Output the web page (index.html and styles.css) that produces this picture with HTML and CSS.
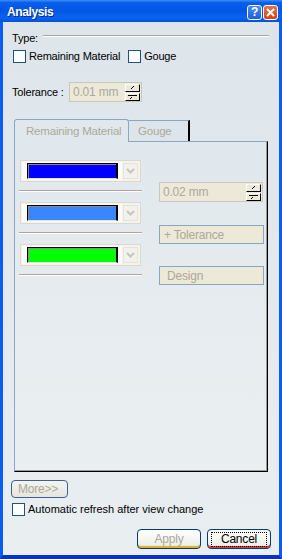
FILE: index.html
```html
<!DOCTYPE html>
<html lang="en">
<head>
  <meta charset="UTF-8" />
  <title>Analysis</title>
  <link rel="stylesheet" href="styles.css">
</head>
<body>
  <div class="window">
    <div class="titlebar">
      <span class="title">Analysis</span>
      <div class="capBtns">
        <span class="capBtn help">?</span>
        <span class="capBtn close">
          <svg width="9" height="9" viewBox="0 0 9 9"><path d="M1 1L8 8M8 1L1 8" stroke="#fff" stroke-width="2"/></svg>
        </span>
      </div>
    </div>
    <div class="frame">
      <div class="content">
        <div class="groupHead"><span>Type:</span><span class="rule"></span></div>
        <div class="checkRow">
          <label class="check"><span class="box"></span>Remaining Material</label>
          <label class="check"><span class="box"></span>Gouge</label>
        </div>
        <div class="tolRow">
          <span class="tolLabel">Tolerance :</span>
          <div class="spin tolSpin">
            <span class="spinVal">0.01 mm</span>
            <span class="spinBtns">
              <span class="spinBtn"><svg width="7" height="5" viewBox="0 0 7 5"><path d="M2 4L5 1" stroke="#000"/></svg></span>
              <span class="spinBtn"><svg width="9" height="6" viewBox="0 0 9 6"><path d="M0 1.5H9M2 5L4 3" stroke="#000"/></svg></span>
            </span>
          </div>
        </div>

        <div class="tabs">
          <div class="tabStrip">
            <span class="tab active">Remaining Material</span>
            <span class="tab">Gouge</span>
          </div>
          <div class="tabPanel">
            <div class="colLeft">
              <div class="combo"><span class="swatchWrap"><span class="swatch blue"></span></span><span class="drop"><svg width="9" height="6" viewBox="0 0 9 6"><path d="M1 1L4.5 4.5L8 1" stroke="#c8c6bb" stroke-width="2" fill="none"/></svg></span></div>
              <div class="sep"></div>
              <div class="combo"><span class="swatchWrap"><span class="swatch sky"></span></span><span class="drop"><svg width="9" height="6" viewBox="0 0 9 6"><path d="M1 1L4.5 4.5L8 1" stroke="#c8c6bb" stroke-width="2" fill="none"/></svg></span></div>
              <div class="sep"></div>
              <div class="combo"><span class="swatchWrap"><span class="swatch green"></span></span><span class="drop"><svg width="9" height="6" viewBox="0 0 9 6"><path d="M1 1L4.5 4.5L8 1" stroke="#c8c6bb" stroke-width="2" fill="none"/></svg></span></div>
              <div class="sep"></div>
            </div>
            <div class="colRight">
              <div class="spin valSpin">
                <span class="spinVal">0.02 mm</span>
                <span class="spinBtns">
                  <span class="spinBtn"><svg width="7" height="5" viewBox="0 0 7 5"><path d="M2 4L5 1" stroke="#000"/></svg></span>
                  <span class="spinBtn"><svg width="9" height="6" viewBox="0 0 9 6"><path d="M0 1.5H9M2 5L4 3" stroke="#000"/></svg></span>
                </span>
              </div>
              <button class="flatBtn tolBtn" type="button">+ Tolerance</button>
              <button class="flatBtn designBtn" type="button">Design</button>
            </div>
          </div>
        </div>

        <button class="moreBtn" type="button">More&gt;&gt;</button>
        <label class="check autoCheck"><span class="box"></span>Automatic refresh after view change</label>
        <div class="actions">
          <button class="btn apply" type="button">Apply</button>
          <button class="btn cancel" type="button"><span class="focusRing">Cancel</span></button>
        </div>
      </div>
    </div>
  </div>
</body>
</html>
```
FILE: styles.css
```css
*{box-sizing:border-box;}
html,body{margin:0;padding:0;}
body{font-family:"Liberation Sans",Arial,sans-serif;font-size:11px;letter-spacing:-.2px;color:#000;background:#fff;}
button{font-family:inherit;font-size:11px;letter-spacing:inherit;margin:0;cursor:default;white-space:nowrap;}

.window{width:282px;height:559px;display:flex;flex-direction:column;}
.titlebar{height:22px;flex:none;display:flex;align-items:center;justify-content:space-between;padding:0 4px 0 7px;background:linear-gradient(#3a8ff8 0%,#0a5eec 12%,#0056e6 45%,#0a62f0 80%,#0052e0 100%);}
.title{color:#fff;font-weight:700;font-size:12px;letter-spacing:-.4px;text-shadow:1px 1px 0 #0a2a8a;margin-top:1px;}
.capBtns{display:flex;gap:1px;margin-top:2px;}
.capBtn{width:15px;height:15px;border:1px solid #fff;border-radius:3px;display:flex;align-items:center;justify-content:center;color:#fff;font-weight:700;font-size:12px;}
.help{background:linear-gradient(#4a8af5,#1e5fe0);}
.close{background:linear-gradient(#e8714a,#d24516);}

.frame{flex:1;display:flex;border-left:3px solid #0b5cf0;border-right:3px solid #0b5cf0;border-bottom:4px solid #0833c8;box-shadow:inset 0 -1px 0 #3a78f0;}
.content{flex:1;display:flex;flex-direction:column;padding:10px 10px 0 9px;background:linear-gradient(#dde5eb,#e9eef1);}

.groupHead{display:flex;align-items:flex-start;height:13px;line-height:13px;}
.rule{flex:1;margin:3px 0 0 5px;border-top:1px solid #a9a898;border-bottom:1px solid #fff;}

.checkRow{display:flex;gap:7px;margin-top:5px;}
.check{display:flex;align-items:center;gap:3px;line-height:13px;white-space:nowrap;}
.box{width:13px;height:13px;border:1px solid #1c5180;background:#fff;flex:none;}
.checkRow .check{margin-left:1px;}

.tolRow{display:flex;align-items:center;margin-top:19px;}
.tolLabel{width:57px;flex:none;}
.spin{display:flex;justify-content:space-between;align-items:center;background:#ece9d8;border:1px solid #c9c7ba;padding:0 1px 0 3px;color:#aca899;}
.spinVal{font-size:12px;}
.tolSpin{width:73px;height:20px;}
.spinBtns{display:flex;flex-direction:column;gap:1px;}
.spinBtn{width:15px;height:8px;display:flex;align-items:center;justify-content:center;background:#ece9d8;border:1px solid;border-color:#fff #000 #000 #fff;}

.tabs{margin:17px 0 0 2px;width:254px;display:flex;flex-direction:column;}
.tabStrip{display:flex;align-items:flex-end;height:23px;position:relative;z-index:1;margin-bottom:-1px;}
.tab{color:#aca899;font-size:11.5px;display:flex;align-items:center;white-space:nowrap;}
.tab.active{width:115px;height:23px;padding:0 0 1px 11px;border:1px solid #8aa6c1;border-bottom:none;border-radius:3px 3px 0 0;background:#e1e8ed;}
.tab:not(.active){width:61px;height:21px;padding:0 0 1px 9px;border-top:1px solid #8aa6c1;border-right:2px solid #000;margin-bottom:1px;background:#dde5eb;}

.tabPanel{height:331px;display:flex;padding:18px 0 0 4px;border:1px solid;border-color:#8aa6c1 #000 #000 #8aa6c1;box-shadow:inset -1px -1px 0 #9a9a9a;background:linear-gradient(#e1e8ed,#eaeff1);}
.colLeft{width:123px;display:flex;flex-direction:column;}
.combo{margin-left:1px;width:121px;height:22px;display:flex;align-items:center;justify-content:space-between;padding:0 2px 0 1px;background:#f4f3ee;border:1px solid #dcd9cc;}
.swatchWrap{width:100px;height:18px;display:flex;align-items:center;padding-left:5px;background:#fbfbf7;}
.swatch{width:91px;height:16px;border:1px solid #000;border-bottom-color:#e2e2e2;border-right-width:2px;box-shadow:inset 1px 1px 0 #8c8c8c;}
.blue{background:#0000ff;}
.sky{background:#3a86ff;}
.green{background:#00ff00;}
.drop{width:15px;height:16px;display:flex;align-items:center;justify-content:center;background:#f2f1ec;border:1px solid #e6e4da;}
.sep{height:2px;border-top:1px solid #aca899;border-bottom:1px solid #fff;margin:8px 0 10px;}
.sep:last-child{margin-bottom:0;}

.colRight{margin-left:17px;width:105px;display:flex;flex-direction:column;}
.valSpin{margin-top:22px;width:104px;height:20px;}
.flatBtn{height:19px;text-align:left;padding:0 0 0 4px;font-size:12px;color:#aca899;background:#ece9d8;border:1px solid #8aa6c1;}
.tolBtn{margin-top:23px;}
.designBtn{margin-top:22px;padding-left:7px;}

.moreBtn{align-self:flex-start;margin:8px 0 0 -1px;width:57px;height:18px;padding:0 0 0 6px;text-align:left;font-size:12px;color:#aca899;background:linear-gradient(#f4f4f0,#e6e5dd);border:1px solid #3c5fa0;border-radius:4px;}
.autoCheck{margin-top:5px;letter-spacing:0;}

.actions{display:flex;justify-content:flex-end;gap:6px;margin:13px -2px 0 0;}
.btn{width:64px;height:20px;border:1px solid #003c74;border-radius:4px;font-size:12px;background:linear-gradient(#fefefe,#f0f0ea 80%,#dedccf);padding:0;display:flex;align-items:center;justify-content:center;}
.apply{color:#aca899;box-shadow:inset 0 -2px 0 #e0b030;}
.cancel{color:#000;box-shadow:inset 0 -2px 0 #e03a3a;}
.focusRing{border:1px dotted #000;padding:0 5px;line-height:13px;width:56px;text-align:center;}
```
